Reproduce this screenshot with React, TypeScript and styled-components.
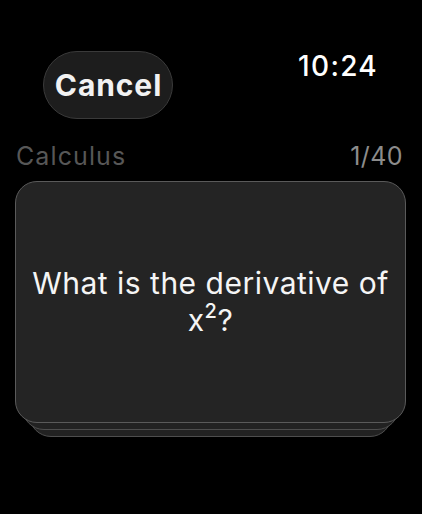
import React from "react";
import styled, { createGlobalStyle } from "styled-components";

const Global = createGlobalStyle`
  html, body {
    margin: 0;
    padding: 0;
    background: #000;
    width: 422px;
    height: 514px;
    overflow: hidden;
  }
  body {
    font-family: Inter, "Noto Sans", "Liberation Sans", sans-serif;
    -webkit-font-smoothing: antialiased;
  }
`;

const Screen = styled.div`
  width: 422px;
  height: 514px;
  background: #000;
  display: flex;
  flex-direction: column;
`;

const Header = styled.div`
  display: flex;
  justify-content: space-between;
  align-items: flex-start;
  padding: 50px 44px 0 43px;
`;

const CancelButton = styled.button`
  margin-top: 1px;
  width: 130px;
  height: 68px;
  border-radius: 34px;
  background: #1d1d1d;
  border: 1.5px solid #3a3a3a;
  color: #f2f2f2;
  font-family: Inter, "Noto Sans", sans-serif;
  font-size: 30px;
  font-weight: 700;
  letter-spacing: 0.9px;
  display: flex;
  align-items: center;
  justify-content: center;
  padding: 0 0 0 1px;
`;

const Time = styled.div`
  color: #fff;
  font-size: 28px;
  font-weight: 500;
  line-height: 1.21;
  letter-spacing: 1.3px;
`;

const InfoRow = styled.div`
  display: flex;
  justify-content: space-between;
  align-items: baseline;
  padding: 22px 19px 0 16px;
  font-size: 25px;
  line-height: 1.21;
`;

const Deck = styled.span`
  color: #575757;
  letter-spacing: 1.1px;
`;

const Counter = styled.span`
  color: #8c8c8c;
  letter-spacing: 0.4px;
`;

const Stack = styled.div`
  position: relative;
  margin: 10px 16px 0 15px;
  height: 256px;
`;

const BackCard = styled.div<{ $inset: number; $drop: number }>`
  position: absolute;
  top: ${(p) => p.$drop}px;
  left: ${(p) => p.$inset}px;
  right: ${(p) => p.$inset}px;
  height: 242px;
  border-radius: 22px;
  background: #222;
  border: 1.5px solid #4e4e4e;
  box-sizing: border-box;
`;

const Card = styled.div`
  position: relative;
  height: 242px;
  box-sizing: border-box;
  border-radius: 22px;
  background: #242424;
  border: 1.5px solid #5a5a5a;
  display: flex;
  align-items: center;
  justify-content: center;
  padding: 0 8px;
`;

const Question = styled.div`
  color: #f5f5f5;
  font-size: 30px;
  line-height: 37px;
  letter-spacing: 0.5px;
  text-align: center;
`;

const Term = styled.span`
  white-space: nowrap;
`;

const Sup = styled.span`
  display: inline-block;
  font-size: 20px;
  line-height: 18px;
  vertical-align: 13px;
  font-weight: 500;
`;

export default function App() {
  return (
    <>
      <Global />
      <Screen>
        <Header>
          <CancelButton>Cancel</CancelButton>
          <Time>10:24</Time>
        </Header>
        <InfoRow>
          <Deck>Calculus</Deck>
          <Counter>1/40</Counter>
        </InfoRow>
        <Stack>
          <BackCard $inset={14} $drop={14} />
          <BackCard $inset={7} $drop={7} />
          <Card>
            <Question>
              {"What is the derivative of "}
              <Term>
                x<Sup>2</Sup>?
              </Term>
            </Question>
          </Card>
        </Stack>
      </Screen>
    </>
  );
}
